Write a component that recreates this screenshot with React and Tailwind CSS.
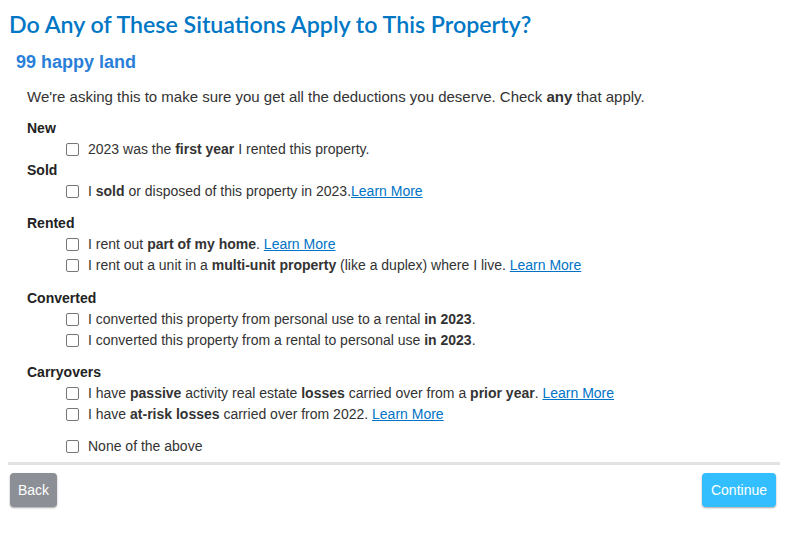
const groups = [
  {
    label: 'New',
    items: [
      <>2023 was the <b>first year</b> I rented this property.</>,
    ],
  },
  {
    label: 'Sold',
    items: [
      <>I <b>sold</b> or disposed of this property in 2023.<a href="#" className="text-[#0073c6] underline">Learn More</a></>,
    ],
  },
  {
    label: 'Rented',
    items: [
      <>I rent out <b>part of my home</b>. <a href="#" className="text-[#0073c6] underline">Learn More</a></>,
      <>I rent out a unit in a <b>multi-unit property</b> (like a duplex) where I live. <a href="#" className="text-[#0073c6] underline">Learn More</a></>,
    ],
  },
  {
    label: 'Converted',
    items: [
      <>I converted this property from personal use to a rental <b>in 2023</b>.</>,
      <>I converted this property from a rental to personal use <b>in 2023</b>.</>,
    ],
  },
  {
    label: 'Carryovers',
    items: [
      <>I have <b>passive</b> activity real estate <b>losses</b> carried over from a <b>prior year</b>. <a href="#" className="text-[#0073c6] underline">Learn More</a></>,
      <>I have <b>at-risk losses</b> carried over from 2022. <a href="#" className="text-[#0073c6] underline">Learn More</a></>,
    ],
  },
];

const Row = ({ children }) => (
  <label className="flex items-center h-[21px] pl-[66px]">
    <span className="w-[13px] h-[13px] border border-[#767676] rounded-[2px] bg-white shrink-0"></span>
    <span className="ml-[9px]">{children}</span>
  </label>
);

const App = () => {
  return (
    <div className="w-[810px] h-[557px] bg-white text-[14px] text-[#333] font-['Liberation_Sans',Arial,sans-serif]">
      <h1 className="pt-[10px] pl-[9px] text-[23.2px] leading-[28px] font-semibold text-[#0077c5] font-['Lato','Open_Sans',sans-serif]">
        Do Any of These Situations Apply to This Property?
      </h1>
      <h2 className="mt-[14px] pl-[16px] text-[18px] leading-[20px] font-bold text-[#2a7fd8]">99 happy land</h2>

      <p className="mt-[15px] pl-[27px] leading-[20px] text-[15px]">
        We're asking this to make sure you get all the deductions you deserve. Check <b>any</b> that apply.
      </p>

      <div className="mt-[11px]">
        {groups.map((g, i) => (
          <div key={g.label} className={i > 1 ? (i === 3 ? 'mt-[12px]' : 'mt-[11px]') : ''}>
            <div className="pl-[27px] h-[21px] flex items-center font-bold text-[#222]">{g.label}</div>
            {g.items.map((it, j) => (
              <Row key={j}>{it}</Row>
            ))}
          </div>
        ))}
        <div className="mt-[11px]">
          <Row>None of the above</Row>
        </div>
      </div>

      <div className="mx-[8px] w-[772px] mt-[5px] h-[3px] bg-[#e2e2e2]"></div>

      <div className="flex justify-between mt-[8px] pl-[10px] pr-[34px]">
        <button className="h-[34px] px-[8px] rounded-[4px] bg-[#8c8f95] text-white text-[14px] shadow-[0_1px_2px_rgba(0,0,0,0.35)]">
          Back
        </button>
        <button className="h-[34px] px-[9px] rounded-[4px] bg-[#33bfff] text-white text-[14px] shadow-[0_1px_2px_rgba(0,0,0,0.35)]">
          Continue
        </button>
      </div>
    </div>
  );
};

export default App;
